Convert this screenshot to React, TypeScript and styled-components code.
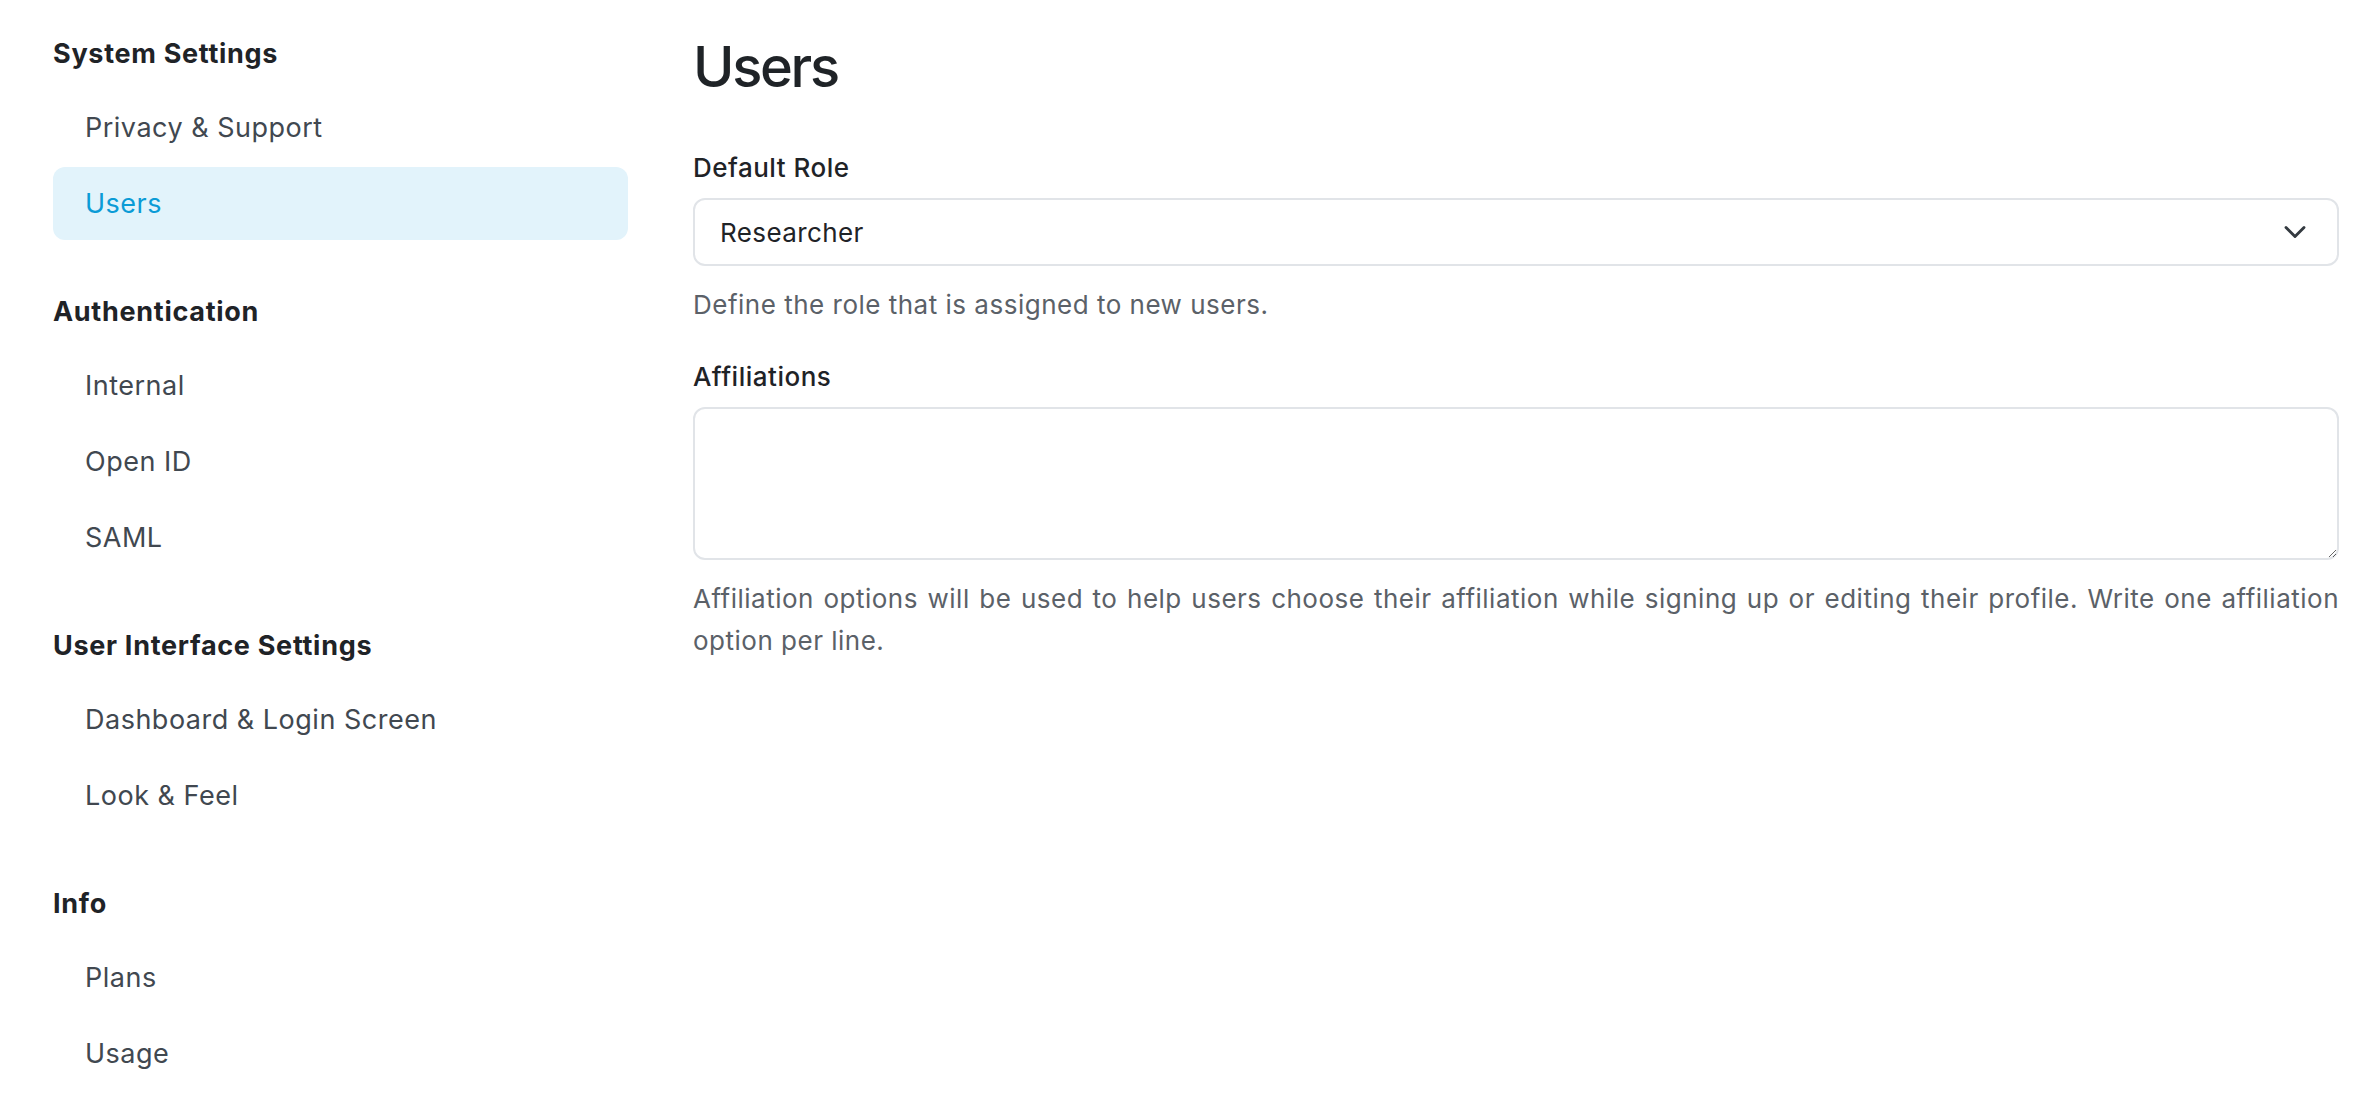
import React from "react";
import styled, { createGlobalStyle } from "styled-components";

const GlobalStyle = createGlobalStyle`
  html, body {
    margin: 0;
    padding: 0;
    background: #ffffff;
  }
  body {
    font-family: Inter, "Noto Sans", "Liberation Sans", sans-serif;
    color: #212529;
    -webkit-font-smoothing: antialiased;
  }
  * { box-sizing: border-box; }
`;

const Page = styled.div`
  display: grid;
  grid-template-columns: 575px 1fr;
  column-gap: 65px;
  padding: 31px 33px 0 53px;
  min-height: 1100px;
`;

const Sidebar = styled.nav`
  display: flex;
  flex-direction: column;
  padding-top: 5px;
`;

const Section = styled.div`
  display: flex;
  flex-direction: column;
  gap: 3px;
  & + & {
    margin-top: 54px;
  }
`;

const SectionTitle = styled.div`
  font-size: 27px;
  line-height: 36px;
  font-weight: 700;
  letter-spacing: 0.7px;
  color: #1f2327;
  margin-bottom: 16px;
`;

const NavItem = styled.a<{ $active?: boolean }>`
  display: flex;
  align-items: center;
  height: 73px;
  padding-left: 32px;
  border-radius: 12px;
  font-size: 27px;
  font-weight: 400;
  letter-spacing: 0.5px;
  text-decoration: none;
  color: ${(p) => (p.$active ? "#0b9bd6" : "#414850")};
  background: ${(p) => (p.$active ? "#e2f3fb" : "transparent")};
`;

const Main = styled.main`
  display: flex;
  flex-direction: column;
`;

const Title = styled.h1`
  margin: 0 0 47px;
  font-size: 56px;
  line-height: 72px;
  font-weight: 500;
  color: #1f2327;
  letter-spacing: -2.3px;
`;

const Field = styled.div`
  display: flex;
  flex-direction: column;
  & + & {
    margin-top: 33px;
  }
`;

const Label = styled.label`
  font-size: 26px;
  line-height: 36px;
  font-weight: 500;
  letter-spacing: 0.5px;
  color: #1f2327;
  margin-bottom: 12px;
`;

const SelectBox = styled.div`
  display: flex;
  align-items: center;
  justify-content: space-between;
  height: 68px;
  padding: 0 30px 0 25px;
  border: 2px solid #e1e4e8;
  border-radius: 12px;
  font-size: 26px;
  letter-spacing: 0.4px;
  color: #1f2327;
`;

const TextArea = styled.textarea`
  display: block;
  width: 100%;
  height: 153px;
  border: 2px solid #e1e4e8;
  border-radius: 12px;
  padding: 14px 25px;
  font-family: inherit;
  font-size: 26px;
  resize: vertical;
  outline: none;
`;

const Help = styled.p`
  margin: 18px 0 0;
  font-size: 26px;
  line-height: 42px;
  letter-spacing: 0.5px;
  text-align: justify;
  color: #5b6168;
`;

const Chevron = () => (
  <svg width="24" height="24" viewBox="0 0 16 16" fill="none">
    <path d="M2 5l6 6 6-6" stroke="#343a40" strokeWidth="1.9" strokeLinecap="round" strokeLinejoin="round" />
  </svg>
);

const sections = [
  { title: "System Settings", items: ["Privacy & Support", "Users"] },
  { title: "Authentication", items: ["Internal", "Open ID", "SAML"] },
  { title: "User Interface Settings", items: ["Dashboard & Login Screen", "Look & Feel"] },
  { title: "Info", items: ["Plans", "Usage"] },
];

export default function App() {
  return (
    <>
      <GlobalStyle />
      <Page>
        <Sidebar>
          {sections.map((s) => (
            <Section key={s.title}>
              <SectionTitle>{s.title}</SectionTitle>
              {s.items.map((it) => (
                <NavItem key={it} $active={it === "Users"}>
                  {it}
                </NavItem>
              ))}
            </Section>
          ))}
        </Sidebar>
        <Main>
          <Title>Users</Title>
          <Field>
            <Label>Default Role</Label>
            <SelectBox>
              <span>Researcher</span>
              <Chevron />
            </SelectBox>
            <Help>Define the role that is assigned to new users.</Help>
          </Field>
          <Field>
            <Label>Affiliations</Label>
            <TextArea />
            <Help>
              Affiliation options will be used to help users choose their affiliation while signing up or editing
              their profile. Write one affiliation option per line.
            </Help>
          </Field>
        </Main>
      </Page>
    </>
  );
}
